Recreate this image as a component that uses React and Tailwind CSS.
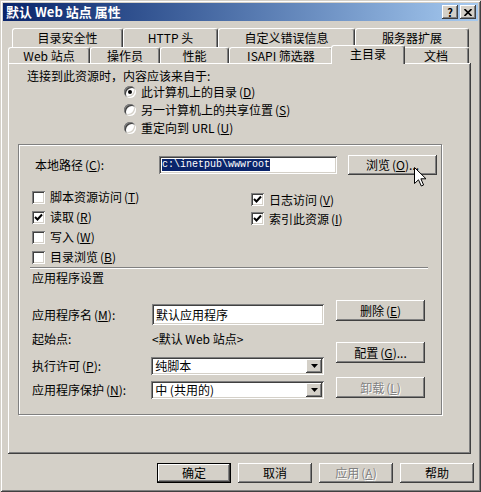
import React from "react";

const raised =
  "shadow-[inset_-1px_-1px_#404040,inset_1px_1px_#fff,inset_-2px_-2px_#808080,inset_2px_2px_#d4d0c8]";
const sunken =
  "shadow-[inset_1px_1px_#808080,inset_-1px_-1px_#fff,inset_2px_2px_#404040,inset_-2px_-2px_#d4d0c8]";
const disabledText = "text-[#808080] [text-shadow:1px_1px_#fff]";

const backTabs = [
  ["目录安全性", "w-[111px]"],
  ["HTTP 头", "w-[95px]"],
  ["自定义错误信息", "w-[137px]"],
  ["服务器扩展", "w-[114px]"],
];

const frontTabs = [
  ["Web 站点", "w-[82px]"],
  ["操作员", "w-[70px]"],
  ["性能", "w-[69px]"],
  ["ISAPI 筛选器", "w-[104px]"],
  ["主目录", "w-[74px]", true],
  ["文档", "w-[66px]"],
];

const Acc = ({ k }) => (
  <span className="ml-[2px]">
    (<span className="underline underline-offset-1">{k}</span>)
  </span>
);

const Tab = ({ label, w, sel }) =>
  sel ? (
    <div
      className={`${w} relative z-10 -mx-[2px] -mb-[1px] h-[19px] flex items-center justify-center pb-[2px] bg-[#d4d0c8] border-l border-t border-r border-l-white border-t-white border-r-[#404040] rounded-t-[3px] shadow-[inset_-1px_0_#808080]`}
    >
      {label}
    </div>
  ) : (
    <div
      className={`${w} h-full flex items-center justify-center border-l border-t border-r border-l-white border-t-white border-r-[#404040] rounded-t-[3px] shadow-[inset_-1px_0_#808080]`}
    >
      {label}
    </div>
  );

const Check = ({ on }) => (
  <span className={`w-[13px] h-[13px] bg-white shrink-0 flex items-center justify-center ${sunken}`}>
    {on && (
      <svg width="9" height="9" viewBox="0 0 9 9">
        <path d="M1 4 L3.5 6.5 L8 1.5" fill="none" stroke="#000" strokeWidth="2" />
      </svg>
    )}
  </span>
);

const Radio = ({ on }) => (
  <span className={`w-[12px] h-[12px] rounded-full bg-white shrink-0 flex items-center justify-center ${sunken}`}>
    {on && <span className="w-[4px] h-[4px] rounded-full bg-black" />}
  </span>
);

const Button = ({ children, w = "w-[89px]", h = "h-[21px]", disabled, def }) =>
  def ? (
    <div className={`${w} ${h} border border-black bg-[#d4d0c8]`}>
      <div className={`w-full h-full flex items-center justify-center ${raised}`}>{children}</div>
    </div>
  ) : (
    <div
      className={`${w} ${h} flex items-center justify-center bg-[#d4d0c8] ${raised} ${disabled ? disabledText : ""}`}
    >
      {children}
    </div>
  );

const Combo = ({ value }) => (
  <div className={`w-[174px] h-[18px] bg-white flex items-center pl-[4px] pr-[2px] ${sunken}`}>
    <span className="flex-1">{value}</span>
    <span className={`w-[16px] h-[14px] bg-[#d4d0c8] flex items-center justify-center ${raised}`}>
      <svg width="7" height="4" viewBox="0 0 7 4">
        <path d="M0 0 H7 L3.5 4 Z" fill="#000" />
      </svg>
    </span>
  </div>
);

export default function App() {
  return (
    <div className="relative w-[481px] h-[492px] bg-[#d4d0c8] p-[3px] overflow-hidden font-['Noto_Sans_CJK_SC','Noto_Sans',sans-serif] text-[12px] leading-[14px] text-black shadow-[inset_1px_1px_#d4d0c8,inset_-1px_-1px_#404040,inset_2px_2px_#fff,inset_-2px_-2px_#808080]">
      {/* Title bar */}
      <div className="h-[18px] flex items-center justify-between pl-[3px] pr-[2px] bg-linear-to-r from-[#0a246a] to-[#a6caf0]">
        <span className="text-white font-bold text-[13px]">默认 Web 站点 属性</span>
        <div className="flex gap-[2px]">
          <span className={`w-[16px] h-[14px] bg-[#d4d0c8] flex items-center justify-center font-bold text-[11px] leading-none ${raised}`}>
            ?
          </span>
          <span className={`w-[16px] h-[14px] bg-[#d4d0c8] flex items-center justify-center ${raised}`}>
            <svg width="8" height="7" viewBox="0 0 8 7">
              <path d="M0.5 0 L7.5 7 M7.5 0 L0.5 7" stroke="#000" strokeWidth="1.6" />
            </svg>
          </span>
        </div>
      </div>

      {/* Tabs */}
      <div className="mt-[7px] ml-[9px] h-[19px] flex">
        {backTabs.map(([l, w]) => (
          <Tab key={l} label={l} w={w} />
        ))}
      </div>
      <div className="ml-[5px] h-[16px] flex items-end">
        {frontTabs.map(([l, w, s]) => (
          <Tab key={l} label={l} w={w} sel={s} />
        ))}
      </div>

      {/* Panel */}
      <div className={`ml-[5px] w-[463px] h-[391px] pt-[6px] ${raised}`}>
        <div className="pl-[19px]">连接到此资源时，内容应该来自于:</div>
        <div className="pl-[116px]">
          <div className="h-[18px] flex items-center gap-[5px]">
            <Radio on />
            <span>
              此计算机上的目录<Acc k="D" />
            </span>
          </div>
          <div className="h-[18px] flex items-center gap-[5px]">
            <Radio />
            <span>
              另一计算机上的共享位置<Acc k="S" />
            </span>
          </div>
          <div className="h-[18px] flex items-center gap-[5px]">
            <Radio />
            <span>
              重定向到 URL<Acc k="U" />
            </span>
          </div>
        </div>

        {/* Group box */}
        <div className="mt-[7px] ml-[10px] w-[424px] h-[271px] border border-[#808080] shadow-[inset_1px_1px_#fff,1px_1px_#fff] pt-[10px] pl-[13px]">
          <div className="h-[20px] flex items-center ml-[3px]">
            <span className="w-[124px]">
              本地路径<Acc k="C" />:
            </span>
            <div className={`w-[178px] h-[18px] bg-white flex items-center pl-[3px] ${sunken}`}>
              <span className="bg-[#0a246a] text-white font-['Liberation_Mono',monospace] text-[10px] leading-[12px]">
                c:\inetpub\wwwroot
              </span>
            </div>
            <div className="ml-[11px]">
              <Button h="h-[20px]">
                浏览<Acc k="O" />...
              </Button>
            </div>
          </div>

          <div className="mt-[12px] flex">
            <div className="w-[219px]">
              <div className="h-[20px] flex items-center gap-[5px]">
                <Check />
                <span>
                  脚本资源访问<Acc k="T" />
                </span>
              </div>
              <div className="h-[20px] flex items-center gap-[5px]">
                <Check on />
                <span>
                  读取<Acc k="R" />
                </span>
              </div>
              <div className="h-[20px] flex items-center gap-[5px]">
                <Check />
                <span>
                  写入<Acc k="W" />
                </span>
              </div>
              <div className="h-[20px] flex items-center gap-[5px]">
                <Check />
                <span>
                  目录浏览<Acc k="B" />
                </span>
              </div>
            </div>
            <div className="pt-[3px]">
              <div className="h-[19px] flex items-center gap-[5px]">
                <Check on />
                <span>
                  日志访问<Acc k="V" />
                </span>
              </div>
              <div className="h-[19px] flex items-center gap-[5px]">
                <Check on />
                <span>
                  索引此资源<Acc k="I" />
                </span>
              </div>
            </div>
          </div>

          <div className="-ml-[2px] w-[398px] h-[2px] border-t border-t-[#808080] border-b border-b-white" />
          <div className="mt-[2px]">应用程序设置</div>

          <div className="flex items-start">
            <div className="w-[292px] mt-[19px]">
              <div className="h-[21px] flex items-center">
                <span className="w-[120px]">
                  应用程序名<Acc k="M" />:
                </span>
                <div className={`w-[172px] h-[21px] bg-white flex items-center pl-[4px] ${sunken}`}>默认应用程序</div>
              </div>
              <div className="mt-[5px] h-[18px] flex items-center">
                <span className="w-[120px]">起始点:</span>
                <span>&lt;默认 Web 站点&gt;</span>
              </div>
              <div className="mt-[9px] h-[18px] flex items-center">
                <span className="w-[120px]">
                  执行许可<Acc k="P" />:
                </span>
                <Combo value="纯脚本" />
              </div>
              <div className="mt-[6px] h-[18px] flex items-center">
                <span className="w-[120px]">
                  应用程序保护<Acc k="N" />:
                </span>
                <Combo value="中 (共用的)" />
              </div>
            </div>
            <div className="ml-[12px] mt-[15px]">
              <Button>
                删除<Acc k="E" />
              </Button>
              <div className="mt-[21px]">
                <Button>
                  配置<Acc k="G" />...
                </Button>
              </div>
              <div className="mt-[14px]">
                <Button disabled>
                  卸载<Acc k="L" />
                </Button>
              </div>
            </div>
          </div>
        </div>
      </div>

      {/* Bottom buttons */}
      <div className="mt-[9px] mr-[4px] flex justify-end gap-[7px]">
        <Button w="w-[74px]" h="h-[20px]" def>
          确定
        </Button>
        <Button w="w-[74px]" h="h-[20px]">
          取消
        </Button>
        <Button w="w-[74px]" h="h-[20px]" disabled>
          应用<Acc k="A" />
        </Button>
        <Button w="w-[74px]" h="h-[20px]">
          帮助
        </Button>
      </div>

      {/* Mouse pointer */}
      <svg className="absolute left-[414px] top-[167px]" width="13" height="20" viewBox="0 0 13 20">
        <path
          d="M0.5 0.5 L0.5 16.5 L4.5 12.8 L7.3 19 L9.6 18 L6.9 11.8 L12 11.8 Z"
          fill="#fff"
          stroke="#000"
          strokeWidth="1"
        />
      </svg>
    </div>
  );
}
